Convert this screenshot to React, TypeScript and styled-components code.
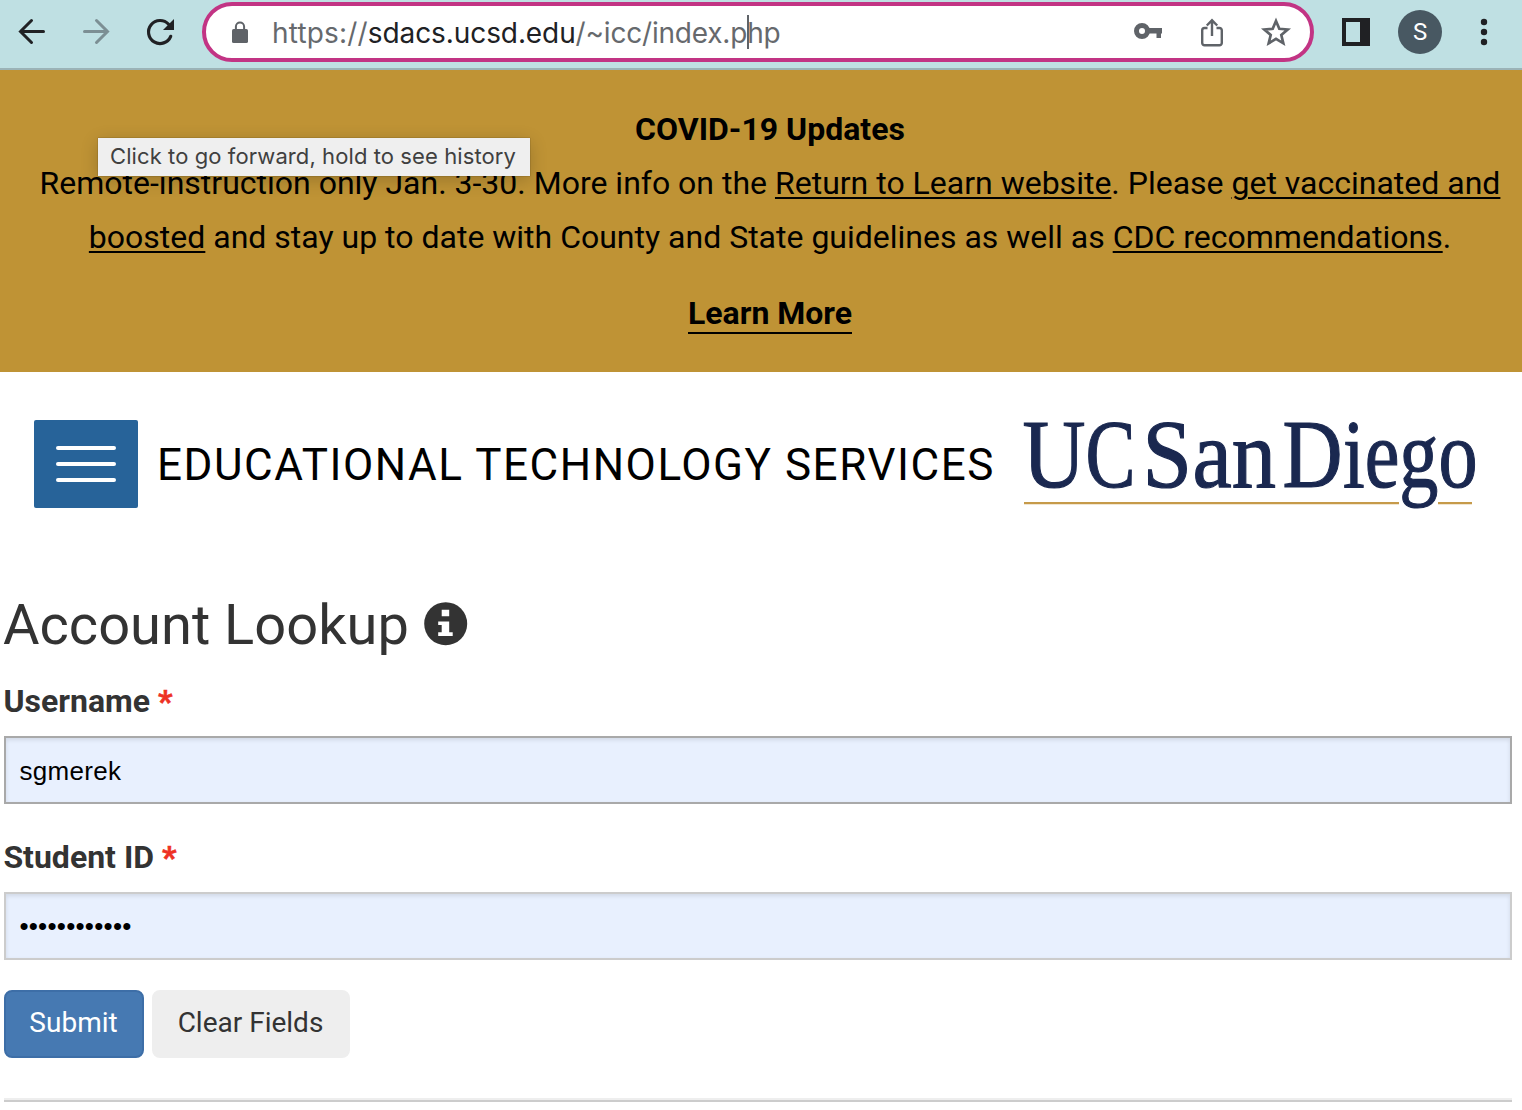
import React from 'react';
import styled, { createGlobalStyle } from 'styled-components';

const GlobalStyle = createGlobalStyle`
  * { box-sizing: border-box; }
  body { margin: 0; background: #fff; font-family: Roboto, sans-serif; overflow: hidden; }
`;

const Window = styled.div`
  position: relative;
  width: 1522px;
  height: 1110px;
  overflow: hidden;
  background: #fff;
`;

const Toolbar = styled.div`
  display: flex;
  align-items: center;
  height: 70px;
  padding: 0 16px 4px;
  background: #bfe0e3;
  border-bottom: 2px solid #9bb3b7;
`;

const NavIcons = styled.div`
  display: flex;
  gap: 32px;
  margin-right: 26px;
`;

const Icon = styled.svg<{ $size?: number }>`
  display: block;
  flex: none;
  width: ${(p) => p.$size ?? 32}px;
  height: ${(p) => p.$size ?? 32}px;
  overflow: visible;
`;

const AddressBar = styled.div`
  display: flex;
  align-items: center;
  flex: none;
  width: 1112px;
  height: 60px;
  padding: 0 18px;
  border: 4px solid #c23484;
  border-radius: 30px;
  background: #fff;
`;

const Url = styled.div`
  flex: 1;
  margin-left: 16px;
  font: 400 28px/34px Inter, sans-serif;
  letter-spacing: -0.2px;
  color: #66696d;
  white-space: nowrap;
`;

const Scheme = styled.span`
  letter-spacing: 0.18px;
`;

const Host = styled.span`
  color: #202124;
  letter-spacing: -0.09px;
`;

const Caret = styled.span`
  display: inline-block;
  width: 2px;
  height: 34px;
  margin: 0 -2px 0 0;
  vertical-align: -6px;
  background: #5f6368;
`;

const BarActions = styled.div`
  display: flex;
  gap: 32px;
`;

const RightTools = styled.div`
  display: flex;
  align-items: center;
  margin-left: 26px;
`;

const Avatar = styled.div`
  display: grid;
  place-items: center;
  width: 44px;
  height: 44px;
  margin: 0 26px;
  border-radius: 50%;
  background: #485862;
  color: #fff;
  font: 400 24px/44px Roboto, sans-serif;
`;

const Tooltip = styled.div`
  position: absolute;
  left: 98px;
  top: 138px;
  width: 432px;
  height: 38px;
  padding-left: 12px;
  background: #efefef;
  box-shadow: 0 0 1px rgba(0, 0, 0, 0.5), 0 4px 18px rgba(0, 0, 0, 0.2);
  color: #404040;
  font: 400 22px/37px Inter, sans-serif;
  letter-spacing: 0.09px;
  white-space: nowrap;
`;

const Banner = styled.section`
  height: 302px;
  padding: 32px 20px 0 38px;
  background: #bf9335;
  color: #000;
  text-align: center;
  font-size: 32px;
  line-height: 54px;
`;

const BannerTitle = styled.div`
  font-weight: 700;
`;

const BannerText = styled.p`
  margin: 0 0 22px;
`;

const BannerLine = styled.span`
  display: block;
  white-space: nowrap;
`;

const BannerLink = styled.a`
  text-decoration: underline;
  text-decoration-thickness: 2px;
  text-underline-offset: 3px;
`;

const LearnMore = styled.a`
  display: inline-block;
  height: 48px;
  border-bottom: 2px solid #000;
  font-weight: 700;
`;

const SiteHeader = styled.header`
  display: flex;
  align-items: flex-start;
  height: 222px;
  padding: 48px 0 0 34px;
`;

const MenuButton = styled.div`
  display: flex;
  flex-direction: column;
  align-items: center;
  justify-content: center;
  gap: 12px;
  width: 104px;
  height: 88px;
  border-radius: 2px;
  background: #276399;
`;

const MenuBar = styled.span`
  width: 60px;
  height: 4px;
  border-radius: 2px;
  background: #fff;
`;

const SiteTitle = styled.div`
  width: 867px;
  padding-left: 19px;
  color: #000;
  font-size: 44px;
  line-height: 90px;
  letter-spacing: 1.54px;
  white-space: nowrap;
`;

const Logo = styled.svg`
  display: block;
  width: 460px;
  height: 100px;
  margin-left: 15px;
  overflow: visible;
  font-family: "Liberation Serif", serif;
  font-size: 97px;
`;

const Main = styled.main`
  padding: 0 10px 0 4px;
  color: #333;
`;

const Heading = styled.h1`
  display: flex;
  align-items: center;
  gap: 14px;
  height: 62px;
  margin: 0 0 0 -1px;
  font-size: 56px;
  line-height: 62px;
  font-weight: 400;
`;

const Field = styled.div`
  display: flex;
  flex-direction: column;
  height: 156px;
  padding-top: 25px;
`;

const Label = styled.label`
  margin: 0 0 15px -0.6px;
  font-size: 32px;
  line-height: 40px;
  font-weight: 700;
`;

const Required = styled.span`
  color: #ee3124;
  -webkit-text-stroke: 0.6px #ee3124;
`;

const Input = styled.div<{ $border: string; $spacing: number; $lineHeight: number }>`
  height: 68px;
  padding-left: 13.4px;
  border: 2px solid ${(p) => p.$border};
  background: #e8f0fe;
  box-shadow: inset 0 2px 4px rgba(0, 0, 0, 0.1);
  color: #000;
  font: 400 26px "Liberation Sans", sans-serif;
  line-height: ${(p) => p.$lineHeight}px;
  letter-spacing: ${(p) => p.$spacing}px;
`;

const Actions = styled.div`
  display: flex;
  gap: 8px;
  margin-top: 22px;
  padding-bottom: 40px;
  border-bottom: 2px solid #eee;
`;

const Button = styled.button<{ $primary?: boolean }>`
  width: ${(p) => (p.$primary ? 140 : 198)}px;
  height: 68px;
  padding: 0 1px 3px 0;
  border: 2px solid ${(p) => (p.$primary ? '#3d6ea7' : '#eee')};
  border-radius: 8px;
  background: ${(p) => (p.$primary ? '#4679b2' : '#eee')};
  color: ${(p) => (p.$primary ? '#fff' : '#333')};
  font: 400 28px Roboto, sans-serif;
`;

const Rule = styled.div`
  height: 2px;
  background: #ccc;
`;

function BrowserToolbar() {
  return (
    <Toolbar>
      <NavIcons>
        <Icon viewBox="0 0 32 32" fill="none" stroke="#202124" strokeWidth="3" strokeLinecap="round">
          <path d="M27.500 15.500H4.500M15.500 4.500L4.500 15.500L15.500 26.500" />
        </Icon>
        <Icon viewBox="0 0 32 32" fill="none" stroke="#7c8f94" strokeWidth="3" strokeLinecap="round">
          <path d="M4.500 15.500H27.500M16.500 4.500L27.500 15.500L16.500 26.500" />
        </Icon>
        <Icon viewBox="0 0 32 32" fill="none">
          <path d="M26.700 20.300A11.500 11.500 0 1 1 24.600 8.300" stroke="#202124" strokeWidth="3.200" strokeLinecap="round" />
          <path d="M30 3V14H19Z" fill="#202124" />
        </Icon>
      </NavIcons>
      <AddressBar>
        <Icon viewBox="0 0 32 32">
          <path d="M11.900 14V10.600a4.100 4.100 0 0 1 8.200 0V14" fill="none" stroke="#5f6368" strokeWidth="2" />
          <rect x="8" y="13" width="16" height="14" rx="1.600" fill="#5f6368" />
        </Icon>
        <Url>
          <Scheme>https://</Scheme>
          <Host>sdacs.ucsd.edu</Host>/~icc/index.p<Caret />hp
        </Url>
        <BarActions>
          <Icon viewBox="0 0 32 32" fill="none">
            <circle cx="10" cy="15" r="5.500" stroke="#5f6368" strokeWidth="5" />
            <path d="M16.500 12H30V17.500H29V22H24.500V17.500H16.500Z" fill="#5f6368" />
          </Icon>
          <Icon viewBox="0 0 32 32" fill="none" stroke="#5f6368" strokeWidth="2.400">
            <path d="M11.500 12H8.500a2.300 2.300 0 0 0-2.300 2.300V27a2.300 2.300 0 0 0 2.300 2.300H23.500a2.300 2.300 0 0 0 2.300-2.300V14.300a2.300 2.300 0 0 0-2.300-2.300H20.500" />
            <path d="M16 20V4.500M10.800 9.500L16 4.300L21.200 9.500" />
          </Icon>
          <Icon viewBox="0 0 32 32" fill="none">
            <path d="M16 5L19.300 12.800L27.700 13.500L21.300 19L23.300 27.300L16 22.900L8.700 27.300L10.700 19L4.300 13.500L12.700 12.800Z" stroke="#5f6368" strokeWidth="2.700" />
          </Icon>
        </BarActions>
      </AddressBar>
      <RightTools>
        <Icon viewBox="0 0 32 32">
          <path fillRule="evenodd" d="M2 2H30V30H2ZM6 6V26H20V6Z" fill="#202124" />
        </Icon>
        <Avatar>S</Avatar>
        <Icon viewBox="0 0 32 32" fill="#202124">
          <circle cx="16" cy="6" r="3.200" />
          <circle cx="16" cy="16" r="3.200" />
          <circle cx="16" cy="26" r="3.200" />
        </Icon>
      </RightTools>
    </Toolbar>
  );
}

/* Wordmark runs: letters, left edge, set width. */
const wordmark: [string, number, number][] = [
  ['U', 2.5, 63],
  ['C', 65.5, 50],
  ['S', 122.5, 49.5],
  ['an', 172.5, 83.5],
  ['D', 262.5, 60],
  ['iego', 323, 134.5],
];

function UniversityLogo() {
  return (
    <Logo viewBox="0 0 460 100" fill="#1a2850">
      <path d="M4 83.200H379M418 83.200H452" stroke="#c69a4a" strokeWidth="2.200" />
      <g stroke="#1a2850" strokeWidth="1.200">
        {wordmark.map(([letters, x, width]) => (
          <text key={letters} x={x} y="67" textLength={width} lengthAdjust="spacingAndGlyphs">
            {letters}
          </text>
        ))}
      </g>
    </Logo>
  );
}

export default function App() {
  return (
    <Window>
      <GlobalStyle />
      <BrowserToolbar />
      <Banner>
        <BannerTitle>COVID-19 Updates</BannerTitle>
        <BannerText>
          <BannerLine>
            Remote-instruction only Jan. 3-30. More info on the <BannerLink>Return to Learn website</BannerLink>.
            Please <BannerLink>get vaccinated and</BannerLink>
          </BannerLine>
          <BannerLine>
            <BannerLink>boosted</BannerLink> and stay up to date with County and State guidelines as well as{' '}
            <BannerLink>CDC recommendations</BannerLink>.
          </BannerLine>
        </BannerText>
        <LearnMore>Learn More</LearnMore>
      </Banner>
      <SiteHeader>
        <MenuButton>
          <MenuBar />
          <MenuBar />
          <MenuBar />
        </MenuButton>
        <SiteTitle>EDUCATIONAL TECHNOLOGY SERVICES</SiteTitle>
        <UniversityLogo />
      </SiteHeader>
      <Main>
        <Heading>
          Account Lookup
          <Icon $size={44} viewBox="0 0 44 44">
            <circle cx="22.700" cy="20.700" r="21.500" fill="#333" />
            <path d="M18.700 6.700H26.200V13.200H18.700ZM15.200 18.500H26.200V29.200H29.700V33H15.200V29.200H18.700V22H15.200Z" fill="#fff" />
          </Icon>
        </Heading>
        <Field>
          <Label>
            Username <Required>*</Required>
          </Label>
          <Input $border="#a9a9a9" $spacing={0.32} $lineHeight={66}>
            sgmerek
          </Input>
        </Field>
        <Field>
          <Label>
            Student ID <Required>*</Required>
          </Label>
          <Input $border="#ccc" $spacing={0.25} $lineHeight={64}>
            ••••••••••••
          </Input>
        </Field>
        <Actions>
          <Button $primary>Submit</Button>
          <Button>Clear Fields</Button>
        </Actions>
        <Rule />
      </Main>
      <Tooltip>Click to go forward, hold to see history</Tooltip>
    </Window>
  );
}
